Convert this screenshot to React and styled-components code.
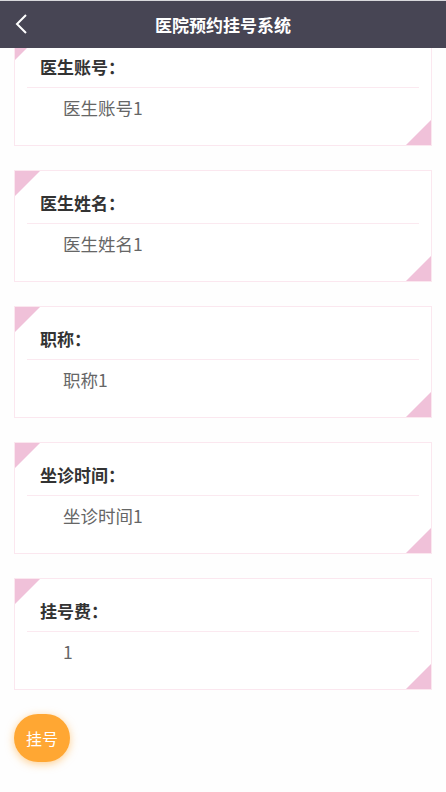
import React from 'react'
import styled, { createGlobalStyle } from 'styled-components'

const GlobalCSS = createGlobalStyle`
  * {
    box-sizing: border-box;
  }
  html, body {
    margin: 0;
    padding: 0;
    background: #fefefe;
    font-family: "Noto Sans CJK SC", "Liberation Sans", sans-serif;
  }
`

const Header = styled.header`
  position: fixed;
  top: 0;
  left: 0;
  right: 0;
  height: 48px;
  background: #474554;
  border-top: 1px solid #d8d8dc;
  display: flex;
  align-items: center;
  justify-content: center;
  z-index: 10;
`

const BackButton = styled.button`
  position: absolute;
  left: 10px;
  top: 10px;
  width: 22px;
  height: 26px;
  border: 0;
  padding: 0;
  background: transparent;
  display: flex;
  align-items: center;
  justify-content: center;
`

const Title = styled.h1`
  margin: 0;
  color: #fff;
  font-size: 17px;
  font-weight: bold;
`

const Page = styled.main`
  padding: 34px 14px 40px;
  display: flex;
  flex-direction: column;
  gap: 24px;
`

const Card = styled.section`
  position: relative;
  height: 112px;
  border: 1px solid #fbe7ef;
  background: #fff;

  &::before,
  &::after {
    content: '';
    position: absolute;
    width: 0;
    height: 0;
  }
  &::before {
    top: 0;
    left: 0;
    border-top: 25px solid #f0c1d9;
    border-right: 25px solid transparent;
  }
  &::after {
    bottom: 0;
    right: 0;
    border-bottom: 25px solid #f0c1d9;
    border-left: 25px solid transparent;
  }
`

const Label = styled.div`
  margin: 0 12px;
  padding: 21px 0 9px 13px;
  line-height: 22px;
  font-size: 17px;
  font-weight: bold;
  color: #333;
  border-bottom: 1px solid #fbe9f0;
`

const Value = styled.div`
  padding: 9px 0 0 48px;
  line-height: 22px;
  font-size: 17.5px;
  color: #666;
`

const OrderButton = styled.button`
  align-self: flex-start;
  width: 56px;
  height: 48px;
  border: 0;
  border-radius: 24px;
  background: #ffa733;
  color: #fff;
  font-family: inherit;
  font-size: 16px;
  box-shadow: 0 2px 8px rgba(255, 167, 51, 0.55);
`

const fields = [
  { label: '医生账号：', value: '医生账号1' },
  { label: '医生姓名：', value: '医生姓名1' },
  { label: '职称：', value: '职称1' },
  { label: '坐诊时间：', value: '坐诊时间1' },
  { label: '挂号费：', value: '1' },
]

export default function App() {
  return (
    <>
      <GlobalCSS />
      <Header>
        <BackButton aria-label="返回">
          <svg width="14" height="22" viewBox="0 0 14 22">
            <polyline points="12,2 3,11 12,20" fill="none" stroke="#fff" strokeWidth="2" />
          </svg>
        </BackButton>
        <Title>医院预约挂号系统</Title>
      </Header>
      <Page>
        {fields.map((f) => (
          <Card key={f.label}>
            <Label>{f.label}</Label>
            <Value>{f.value}</Value>
          </Card>
        ))}
        <OrderButton>挂号</OrderButton>
      </Page>
    </>
  )
}
